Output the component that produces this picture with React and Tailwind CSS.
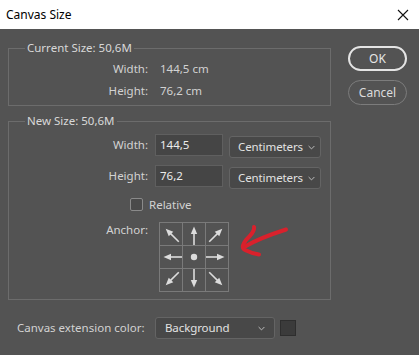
import React from "react";

function Chevron() {
  return (
    <svg width="7" height="5" viewBox="0 0 7 5" className="shrink-0">
      <path d="M0.6 1 L3.5 3.9 L6.4 1" fill="none" stroke="#bdbdbd" strokeWidth="1" />
    </svg>
  );
}

function Dropdown({ label, w, pl = "pl-[8px]", pr = "pr-[5px]" }) {
  return (
    <div
      className={`${w} h-[22px] bg-[#484848] border border-[#646464] rounded-[3px] flex items-center justify-between ${pl} ${pr} text-[#e2e2e2]`}
    >
      <span className="tracking-[-0.1px]">{label}</span>
      <Chevron />
    </div>
  );
}

function Arrow({ angle }) {
  return (
    <svg width="22" height="22" viewBox="0 0 22 22">
      <g transform={`rotate(${angle} 11 11)`}>
        <line x1="11" y1="22" x2="11" y2="9" stroke="#dcdcdc" strokeWidth="1.6" />
        <polygon points="11,3.5 7.8,11 14.2,11" fill="#dcdcdc" />
      </g>
    </svg>
  );
}

function Dot() {
  return (
    <svg width="22" height="22" viewBox="0 0 22 22">
      <circle cx="11" cy="11" r="3.2" fill="#dcdcdc" />
    </svg>
  );
}

export default function App() {
  const cells = [-45, 0, 45, -90, null, 90, -135, 180, 135];
  return (
    <div className="relative w-[419px] h-[355px] bg-[#535353] font-['Noto_Sans',sans-serif] text-[11.5px] leading-[16px] text-[#d2d2d2] overflow-hidden">
      <div className="h-[29px] bg-white flex items-center justify-between pl-[6px] pr-[10px] text-black text-[12px]">
        <span>Canvas Size</span>
        <svg width="12" height="12" viewBox="0 0 12 12">
          <path d="M1 1 L11 11 M11 1 L1 11" stroke="#111" strokeWidth="1.1" />
        </svg>
      </div>

      <div className="flex pt-[11px] pl-[8px]">
        <div className="w-[323px]">
          <fieldset className="border border-[#6c6c6c] pt-[2px] pb-[3px]">
            <legend className="ml-[16px] px-[2px] text-[#d8d8d8]">Current Size: 50,6M</legend>
            <div className="flex h-[22px] items-center">
              <span className="w-[139px] text-right">Width:</span>
              <span className="ml-[12px]">144,5 cm</span>
            </div>
            <div className="flex h-[22px] items-center">
              <span className="w-[139px] text-right">Height:</span>
              <span className="ml-[12px]">76,2 cm</span>
            </div>
          </fieldset>

          <fieldset className="mt-[7px] border border-[#6c6c6c] pt-[5px] pb-[7px]">
            <legend className="ml-[16px] px-[2px] text-[#d8d8d8]">New Size: 50,6M</legend>
            <div className="flex items-start">
              <span className="w-[139px] h-[22px] flex items-center justify-end">Width:</span>
              <div className="ml-[7px] w-[68px] h-[22px] bg-[#454545] border border-[#5f5f5f] flex items-center pl-[4px] text-[#ececec]">
                144,5
              </div>
              <div className="ml-[6px] mt-[2px]">
                <Dropdown label="Centimeters" w="w-[92px]" />
              </div>
            </div>
            <div className="flex items-start mt-[7px]">
              <span className="w-[139px] h-[22px] flex items-center justify-end">Height:</span>
              <div className="ml-[7px] w-[68px] h-[22px] bg-[#454545] border border-[#5f5f5f] flex items-center pl-[4px] text-[#ececec]">
                76,2
              </div>
              <div className="ml-[6px] mt-[2px]">
                <Dropdown label="Centimeters" w="w-[92px]" />
              </div>
            </div>
            <div className="flex items-center mt-[9px] ml-[121px] h-[13px]">
              <div className="w-[13px] h-[13px] border border-[#8a8a8a] rounded-[2px] bg-[#4a4a4a]" />
              <span className="ml-[6px]">Relative</span>
            </div>
            <div className="flex items-start mt-[11px]">
              <span className="w-[139px] text-right">Anchor:</span>
              <div className="ml-[11px] grid grid-cols-[22px_22px_22px] grid-rows-[22px_22px_22px] gap-px bg-[#7a7a7a] border border-[#7a7a7a]">
                {cells.map((a, i) => (
                  <div key={i} className="bg-[#535353] w-[22px] h-[22px]">
                    {a === null ? <Dot /> : <Arrow angle={a} />}
                  </div>
                ))}
              </div>
            </div>
          </fieldset>
        </div>

        <div className="ml-[17px] pt-[6px] flex flex-col gap-[9px]">
          <div className="w-[59px] h-[25px] rounded-full border-2 border-[#e4e4e4] flex items-center justify-center text-[#e6e6e6] text-[12px]">
            OK
          </div>
          <div className="w-[59px] h-[25px] rounded-full border border-[#7c7c7c] flex items-center justify-center text-[#dcdcdc] text-[12px]">
            Cancel
          </div>
        </div>
      </div>

      <div className="flex items-center mt-[17px] pl-[17px] h-[22px]">
        <span className="w-[138px]">Canvas extension color:</span>
        <Dropdown label="Background" w="w-[120px]" pl="pl-[9px]" pr="pr-[9px]" />
        <div className="ml-[5px] w-[16px] h-[16px] bg-[#3b3b3b] border border-[#2e2e2e]" />
      </div>

      <svg
        className="absolute left-0 top-0 pointer-events-none"
        width="419"
        height="355"
        viewBox="0 0 419 355"
      >
        <path
          d="M286 229.5 C272 234 256 240 245 246.5"
          fill="none"
          stroke="#d9212c"
          strokeWidth="4"
          strokeLinecap="round"
        />
        <path
          d="M254 227 C255 231 250 236 246 240 C243 244 241 248 245 250 C249 252 255 254 259 254.5"
          fill="none"
          stroke="#d9212c"
          strokeWidth="4"
          strokeLinecap="round"
          strokeLinejoin="round"
        />
      </svg>
    </div>
  );
}
